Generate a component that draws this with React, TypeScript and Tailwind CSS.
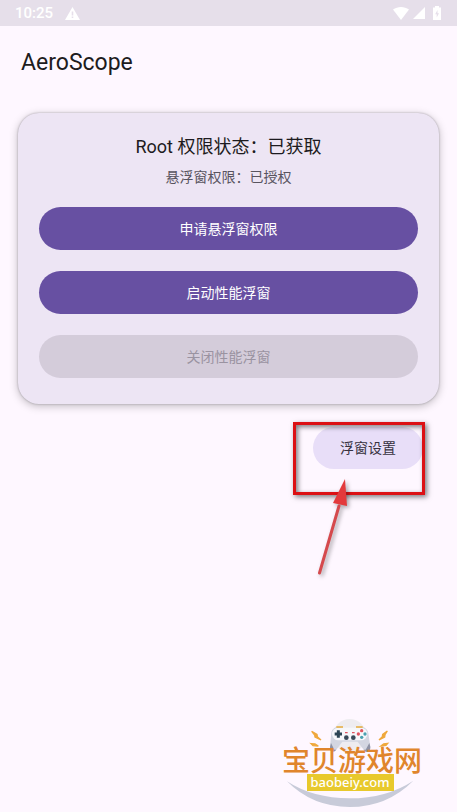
import React, { useState } from 'react';

interface PillButtonProps {
    label: string;
    onClick?: () => void;
    disabled?: boolean;
}

const PillButton: React.FC<PillButtonProps> = ({ label, onClick, disabled = false }) => (
    <button
        type="button"
        onClick={onClick}
        disabled={disabled}
        className="w-full h-[43px] rounded-full bg-[#6750a2] text-sm text-white disabled:bg-[#d4ccda] disabled:text-[#9a93a1]"
    >
        {label}
    </button>
);

const StatusBar: React.FC = () => (
    <header className="flex h-[26px] items-center justify-between bg-[#e6dfea] pr-4 pl-[15px] text-white">
        <div className="flex items-center gap-3">
            <span className="text-[15px] leading-5 font-medium">10:25</span>
            <svg className="h-[13px] w-[15px]" viewBox="0 0 15 13" aria-label="Warning">
                <path fill="currentColor" d="M7.5 0 15 13H0Z" />
                <path fill="#e6dfea" d="M6.7 4.500h1.600v4H6.700zM6.700 9.500h1.600V11H6.700z" />
            </svg>
        </div>
        <div className="flex items-center">
            <svg className="h-[13px] w-4" viewBox="0 0 16 13" aria-label="Wi-Fi">
                <path fill="currentColor" d="M0 2.600C4.600-.8 11.400-.8 16 2.600L8 13Z" />
            </svg>
            <svg className="ml-1 h-3 w-3" viewBox="0 0 12 12" aria-label="Signal">
                <path fill="currentColor" d="M12 0v12H0Z" />
            </svg>
            <svg className="ml-2 h-[14px] w-2" viewBox="0 0 8 14" aria-label="Battery">
                <path fill="currentColor" d="M2 0h4v1.500h2V14H0V1.500h2z" />
                <path fill="#e6dfea" d="M4.500 4 2.200 8.200h1.500V11.500l2.300-4.300H4.500z" />
            </svg>
        </div>
    </header>
);

// Red frame and arrow pointing at the settings button
const Callout: React.FC = () => (
    <div className="pointer-events-none absolute -top-[5px] -right-[2px] h-[73px] w-[132px] border-3 border-[#dc1014] shadow-[2px_2px_5px_rgba(0,0,0,0.5),inset_2px_2px_5px_rgba(0,0,0,0.5)]">
        <svg
            className="absolute top-[54px] left-[20px] h-[102px] w-[40px] drop-shadow-[2px_2px_2px_rgba(0,0,0,0.35)]"
            viewBox="0 0 40 102"
            aria-hidden="true"
        >
            <path d="M3.500 94 23 27" stroke="#d5494d" strokeWidth="3" strokeLinecap="round" />
            <path d="M29 0 31 27 17 24Z" fill="#e33a3c" />
        </svg>
    </div>
);

const SiteLogo: React.FC = () => (
    <div className="relative flex h-[91px] w-[142px] flex-col items-center">
        <svg className="absolute inset-0 h-full w-full" viewBox="36 36 426 273" aria-hidden="true">
            <circle cx="242" cy="92" r="50" fill="#eeecf0" />
            <path
                d="M187 84C190 66 208 62 222 70H262C276 62 294 66 298 84L304 126C304 144 290 144 284 134L266 110H220L202 134C194 144 182 140 183 126Z"
                fill="#d3d6e1"
            />
            <path d="m183 126 3-12 10 20 6 0C194 144 182 140 183 126ZM304 126l-3-12-11 20h-6C290 144 304 144 304 126Z" fill="#8f93a6" />
            <rect x="189" y="68" width="106" height="38" rx="19" fill="#f6f7fa" />
            <path d="M202 66h20M261 66h20" stroke="#e6ac3c" strokeWidth="5" />
            <path d="M208 76v22M197 87h22" stroke="#2c4554" strokeWidth="9" />
            <circle cx="278" cy="77" r="5" fill="#e05560" />
            <circle cx="268" cy="87" r="5" fill="#e05560" />
            <circle cx="288" cy="87" r="5" fill="#4aa0b0" />
            <circle cx="278" cy="97" r="5" fill="#4aa0b0" />
            <circle cx="232" cy="98" r="7" fill="#394957" />
            <circle cx="253" cy="98" r="7" fill="#394957" />
            <path d="M228 83h8M249 83h8" stroke="#e05560" strokeWidth="4" />
            <path
                d="m128 79 16 9 1 7 11 10-18-9-1-6ZM126 116l12 1 10 6-16-1ZM355 78l-14 10-1 7-10 10 17-9 1-7ZM356 115l-12 2-8 6 15-2Z"
                fill="#efa83c"
                stroke="#efa83c"
                strokeWidth="4"
            />
            <path d="M54 229Q132 280 242 280T433 227Q354 306 242 306T54 229Z" fill="#c8cbd9" />
        </svg>
        <span className="relative mt-[29px] text-[28px] leading-8 font-medium whitespace-nowrap text-[#e0852c]">
            宝贝游戏网
        </span>
        <a
            href="#"
            className="relative -mt-1 mr-1 h-[17px] bg-[#e8c92c] px-1 font-['Noto_Sans',sans-serif] text-[13px] leading-4 font-medium text-white"
        >
            baobeiy.com
        </a>
    </div>
);

export default function App() {
    const [running, setRunning] = useState(false);

    return (
        <div className="flex min-h-screen flex-col bg-[#fef7ff] font-[Roboto,'Noto_Sans_CJK_SC',sans-serif] text-[#1d1b20]">
            <StatusBar />
            <h1 className="px-[21px] pt-[21px] text-[23px] leading-8">AeroScope</h1>

            <main className="mt-[34px] flex flex-1 flex-col px-[18px]">
                <section className="flex flex-col items-center rounded-[21px] bg-[#ede5f4] px-[21px] pt-5 pb-[26px] shadow-[0_0_2px_rgba(0,0,0,0.3),0_2px_8px_rgba(0,0,0,0.25)]">
                    <h2 className="text-lg leading-7">Root 权限状态：已获取</h2>
                    <p className="mt-1 text-sm leading-6 text-[#58545f]">悬浮窗权限：已授权</p>
                    <div className="mt-[18px] flex w-full flex-col gap-[21px]">
                        <PillButton label="申请悬浮窗权限" />
                        <PillButton label="启动性能浮窗" onClick={() => setRunning(true)} />
                        <PillButton label="关闭性能浮窗" disabled={!running} onClick={() => setRunning(false)} />
                    </div>
                </section>

                <div className="relative mt-[23px] mr-4 self-end">
                    <button type="button" className="h-[42px] w-[110px] rounded-full bg-[#e8def8] text-sm text-[#37323f]">
                        浮窗设置
                    </button>
                    <Callout />
                </div>

                <footer className="mt-auto mr-4 mb-1 self-end">
                    <SiteLogo />
                </footer>
            </main>
        </div>
    );
}
